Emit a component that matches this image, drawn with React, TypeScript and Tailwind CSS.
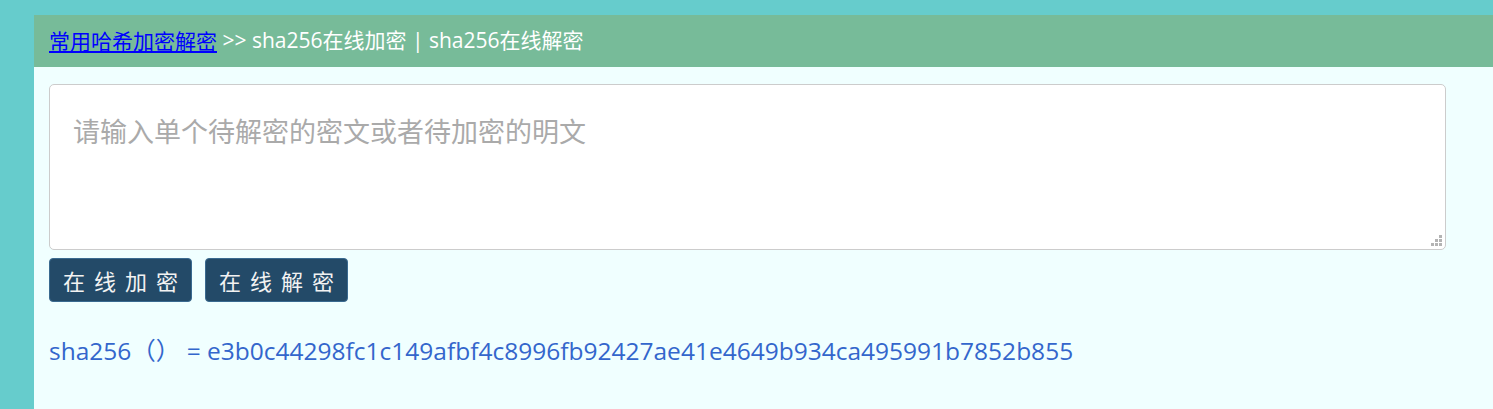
import React from "react";

export default function App() {
  const font = { fontFamily: '"Open Sans", "Noto Sans CJK SC", sans-serif' };
  const cjk = { fontFamily: '"Noto Sans CJK SC", sans-serif' };
  return (
    <div className="min-h-screen bg-[#66cccc] pl-[34px] pt-[15px] flex flex-col" style={font}>
      <div className="flex-1 bg-[#f0ffff] flex flex-col">
        <div className="h-[52px] bg-[#77bb99] flex items-center px-[15px] text-[21px] text-white whitespace-nowrap">
          <a href="#" className="text-[#0000ff] underline text-[21px]" style={cjk}>常用哈希加密解密</a>
          <span>&nbsp;&gt;&gt; sha256在线加密 | sha256在线解密</span>
        </div>
        <div className="px-[15px] pt-[17px]">
          <div className="relative w-[1397px]">
            <textarea
              className="block w-[1397px] h-[166px] resize-none bg-white border border-[#cccccc] rounded-[5px] px-[23px] py-[26px] text-[27px] placeholder:text-[#aaaaaa] outline-none"
              style={cjk}
              placeholder="请输入单个待解密的密文或者待加密的明文"
            />
            <svg className="absolute right-[4px] bottom-[4px]" width="11" height="11" viewBox="0 0 11 11">
              <g fill="#b3b3b3">
                <rect x="8" y="0" width="3" height="3" />
                <rect x="4" y="4" width="3" height="3" />
                <rect x="8" y="4" width="3" height="3" />
                <rect x="0" y="8" width="3" height="3" />
                <rect x="4" y="8" width="3" height="3" />
                <rect x="8" y="8" width="3" height="3" />
              </g>
            </svg>
          </div>
          <div className="flex gap-[13px] mt-[8px]">
            {["在线加密", "在线解密"].map((t) => (
              <button
                key={t}
                className="w-[143px] h-[44px] bg-[#234a68] border border-[#3a6a90] rounded-[4px] text-[#f2f2f2] text-[22px] tracking-[9px] pl-[9px] flex items-center justify-center"
                style={cjk}
              >
                {t}
              </button>
            ))}
          </div>
          <div className="mt-[33px] text-[24.5px] leading-[32px] text-[#3366cc] whitespace-nowrap">
            sha256（） = e3b0c44298fc1c149afbf4c8996fb92427ae41e4649b934ca495991b7852b855
          </div>
        </div>
      </div>
    </div>
  );
}
